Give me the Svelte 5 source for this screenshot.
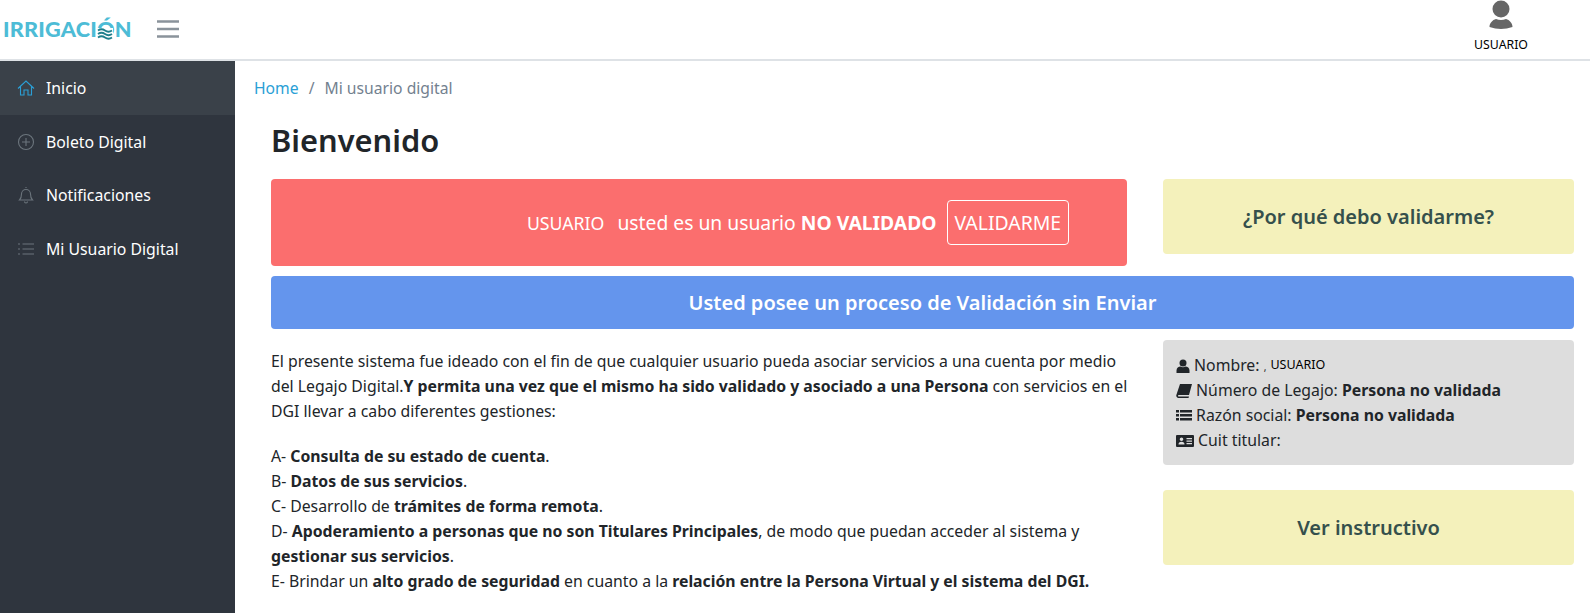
<script>
  const menu = [
    { label: "Inicio", icon: "home", active: true },
    { label: "Boleto Digital", icon: "plus" },
    { label: "Notificaciones", icon: "bell" },
    { label: "Mi Usuario Digital", icon: "list" }
  ];
</script>

<div class="page">
  <header class="topbar">
    <div class="brand">
      <span class="logo">IRRIGACI<span class="logo-o">Ó<svg class="waves" viewBox="0 0 16 12" width="16" height="12"><path d="M1 2.5q3.5-2.5 7 0t7 0M1 6q3.5-2.5 7 0t7 0M1 9.5q3.5-2.5 7 0t7 0" fill="none" stroke="#1f7f8c" stroke-width="1.8"/></svg></span>N</span>
      <svg class="burger" viewBox="0 0 24 20" width="24" height="20"><path d="M1 2.5h22M1 10h22M1 17.5h22" stroke="#8a939b" stroke-width="2.4"/></svg>
    </div>
    <div class="user">
      <svg viewBox="0 0 26 30" width="26" height="30"><circle cx="13" cy="9" r="8.500" fill="#666"/><path d="M1.500 27c0-4 3-7 6.500-8q5 2 10 0c3.500 1 6.500 4 6.500 8q-11.500 4-23 0z" fill="#666"/></svg>
      <span>USUARIO</span>
    </div>
  </header>

  <div class="body">
    <nav class="sidebar">
      {#each menu as item}
        <div class="item" class:active={item.active}>
          <svg class="ico" viewBox="0 0 18 18" width="18" height="18" fill="none" stroke={item.active ? "#2a9fd6" : "#6c757d"} stroke-width="1.100">
            {#if item.icon === "home"}
              <path d="M1 9.500 9 2l8 7.500M3.500 7.500V16h3.500v-5h4v5h3.500V7.500"/>
            {:else if item.icon === "plus"}
              <circle cx="9" cy="9" r="7.500"/><path d="M9 5v8M5 9h8"/>
            {:else if item.icon === "bell"}
              <path d="M2.500 14c1.500-1.500 2-3 2-6a4.500 4.500 0 0 1 9 0c0 3 .5 4.500 2 6zM7.500 15.500a1.500 1.500 0 0 0 3 0M9 2V1"/>
            {:else}
              <path d="M5.500 4H17M5.500 9H17M5.500 14H17M1 4h2M1 9h2M1 14h2"/>
            {/if}
          </svg>
          <span>{item.label}</span>
        </div>
      {/each}
    </nav>

    <main class="content">
      <div class="crumbs"><a href="#home">Home</a><span class="sep">/</span><span>Mi usuario digital</span></div>
      <div class="inner">
        <h1>Bienvenido</h1>
        <div class="top-row">
          <div class="alert-red">
            <span class="u">USUARIO</span>
            <span>usted es un usuario <b>NO VALIDADO</b></span>
            <span class="validate">VALIDARME</span>
          </div>
          <div class="yellow tall">¿Por qué debo validarme?</div>
        </div>
        <div class="blue">Usted posee un proceso de Validación sin Enviar</div>
        <div class="bottom-row">
          <div class="text">
            <p>El presente sistema fue ideado con el fin de que cualquier usuario pueda asociar servicios a una cuenta por medio del Legajo Digital.<b>Y permita una vez que el mismo ha sido validado y asociado a una Persona</b> con servicios en el DGI llevar a cabo diferentes gestiones:</p>
            <p>
              A- <b>Consulta de su estado de cuenta</b>.<br />
              B- <b>Datos de sus servicios</b>.<br />
              C- Desarrollo de <b>trámites de forma remota</b>.<br />
              D- <b>Apoderamiento a personas que no son Titulares Principales</b>, de modo que puedan acceder al sistema y <b>gestionar sus servicios</b>.<br />
              E- Brindar un <b>alto grado de seguridad</b> en cuanto a la <b>relación entre la Persona Virtual y el sistema del DGI.</b>
            </p>
          </div>
          <aside class="side">
            <div class="info">
              <div class="row first">
                <svg viewBox="0 0 14 14" width="14" height="14"><circle cx="7" cy="4" r="3.500" fill="#212529"/><path d="M.5 14v-2.500C.5 9 2.500 7.500 4.500 7.500q2.500 1.500 5 0c2 0 4 1.500 4 4V14z" fill="#212529"/></svg>
                Nombre: <span class="comma">,</span> <span class="name">USUARIO</span>
              </div>
              <div class="row">
                <svg viewBox="0 0 16 14" width="16" height="14"><path d="M4 0h12l-3 11H2.500q-1 1 0 1.500H13l-.5 1.500H2q-2.500-1-1.500-3.500z" fill="#212529"/></svg>
                Número de Legajo: <b>Persona no validada</b>
              </div>
              <div class="row">
                <svg viewBox="0 0 16 14" width="16" height="14"><path d="M0 1h3v2.500H0zM4 1h12v2.500H4zM0 5h3v2.500H0zM4 5h12v2.500H4zM0 9h3v2.500H0zM4 9h12v2.500H4z" fill="#212529"/></svg>
                Razón social: <b>Persona no validada</b>
              </div>
              <div class="row">
                <svg viewBox="0 0 18 14" width="18" height="14"><path fill-rule="evenodd" d="M1 1h16a1 1 0 0 1 1 1v10a1 1 0 0 1-1 1H1a1 1 0 0 1-1-1V2a1 1 0 0 1 1-1zm4.500 2.500a1.800 1.800 0 1 0 0 3.600 1.800 1.800 0 0 0 0-3.600zM2.500 10.500h6c0-2-1-2.800-3-2.800s-3 .8-3 2.800zM10.500 4v1.200H16V4zm0 2.500v1.200H16V6.500zm0 2.500v1.200H16V9z" fill="#212529"/></svg>
                Cuit titular:
              </div>
            </div>
            <div class="yellow">Ver instructivo</div>
          </aside>
        </div>
      </div>
    </main>
  </div>
</div>

<style>
  :global(body) {
    margin: 0;
    background: #fff;
    overflow: hidden;
  }

  .page {
    width: 1590px;
    height: 613px;
    font-family: "Noto Sans", "Open Sans", sans-serif;
    color: #212529;
    font-size: 15px;
    overflow: hidden;
  }

  .topbar {
    height: 59px;
    display: flex;
    align-items: flex-start;
    justify-content: space-between;
    border-bottom: 2px solid #dee2e6;
  }

  .brand {
    display: flex;
    align-items: center;
    height: 58px;
    padding-left: 3px;
    gap: 24px;
  }

  .logo {
    font-family: "Lato", sans-serif;
    font-weight: 900;
    font-size: 21.700px;
    color: #4dbcd6;
    letter-spacing: 0.2px;
  }

  .logo-o {
    position: relative;
    display: inline-block;
  }

  .waves {
    position: absolute;
    left: 0;
    top: 12px;
    background: #fff;
  }

  .user {
    width: 120px;
    margin-right: 29px;
    display: flex;
    flex-direction: column;
    align-items: center;
    font-size: 12.300px;
    color: #000;
    line-height: 16px;
    gap: 7px;
  }

  .body {
    display: flex;
    height: 552px;
  }

  .sidebar {
    width: 235px;
    flex: none;
    background: #2f353e;
  }

  .item {
    height: 53.800px;
    display: flex;
    align-items: center;
    gap: 11px;
    padding-left: 17px;
    color: #fff;
    font-size: 15.800px;
  }

  .item.active {
    background: #3a4149;
  }

  .content {
    flex: 1;
    min-width: 0;
  }

  .crumbs {
    height: 54px;
    display: flex;
    align-items: center;
    padding-left: 19px;
    color: #73818f;
    font-size: 15.700px;
  }

  .crumbs a {
    color: #2a9fd6;
    text-decoration: none;
  }

  .sep {
    margin: 0 10px;
  }

  .inner {
    padding: 0 16px 0 36px;
  }

  h1 {
    margin: 0;
    font-size: 30.800px;
    font-weight: 600;
    line-height: 50px;
    height: 64px;
  }

  .top-row {
    display: flex;
    gap: 36px;
    align-items: flex-start;
  }

  .alert-red {
    width: 856px;
    height: 87px;
    background: #fb6e6e;
    border-radius: 4px;
    color: #fff;
    display: flex;
    align-items: center;
    justify-content: center;
    font-size: 19.300px;
    gap: 13px;
    box-sizing: border-box;
    padding-left: 198px;
  }

  .u {
    font-size: 17.700px;
  }

  .validate {
    border: 1px solid #fff;
    border-radius: 4px;
    padding: 0 7px;
    height: 43px;
    line-height: 43px;
    font-size: 19.400px;
    margin-left: -3px;
  }

  .yellow {
    background: #f4f1bb;
    border-radius: 4px;
    height: 75px;
    display: flex;
    align-items: center;
    justify-content: center;
    color: #35504c;
    font-weight: 600;
    font-size: 20px;
    flex: 1;
  }

  .blue {
    margin-top: 10px;
    height: 53px;
    background: #6495ed;
    border-radius: 4px;
    color: #fff;
    display: flex;
    align-items: center;
    justify-content: center;
    font-weight: 600;
    font-size: 20px;
  }

  .bottom-row {
    display: flex;
    gap: 32px;
    margin-top: 11px;
  }

  .text {
    width: 860px;
    padding-top: 9px;
    line-height: 25px;
    font-size: 15.800px;
  }

  .text p {
    margin: 0 0 20px;
  }

  .side {
    flex: 1;
  }

  .info {
    background: #ddd;
    border-radius: 4px;
    height: 125px;
    box-sizing: border-box;
    padding: 12px 13px;
    font-size: 15.800px;
    margin-bottom: 25px;
  }

  .row {
    height: 25px;
    line-height: 25px;
    white-space: nowrap;
  }

  .row.first {
    height: 26px;
  }

  .info svg {
    vertical-align: -2px;
  }

  .comma {
    font-size: 10px;
  }

  .name {
    color: #000;
    font-size: 12.500px;
    vertical-align: 2px;
  }
</style>
